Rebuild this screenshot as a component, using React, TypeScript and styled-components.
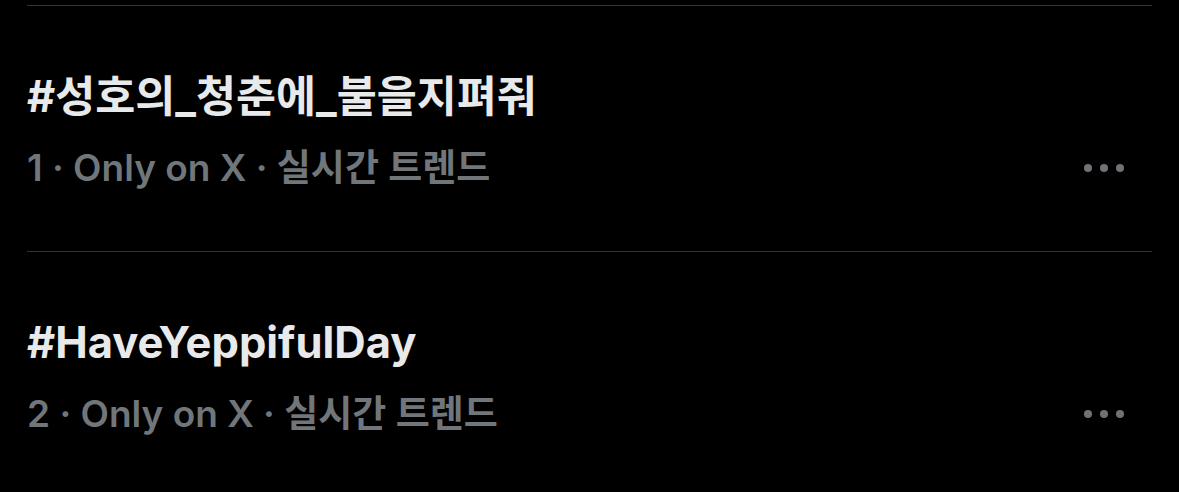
import React from "react";
import styled, { createGlobalStyle } from "styled-components";

const Global = createGlobalStyle`
  html, body { margin: 0; padding: 0; background: #000; }
  body { font-family: Inter, "Noto Sans CJK KR", "Noto Sans", sans-serif; -webkit-font-smoothing: antialiased; }
`;

const List = styled.div`
  padding: 5px 27px 0;
  background: #000;
  min-height: 492px;
  box-sizing: border-box;
`;

const Row = styled.div`
  border-top: 1px solid #2f3336;
  padding: 65px 0 61px;
  display: grid;
  grid-template-columns: 1fr auto;
  grid-template-rows: 50px 44px;
  row-gap: 25px;
  align-items: center;
`;

const Title = styled.div`
  grid-column: 1 / 2;
  font-size: 43.5px;
  line-height: 50px;
  font-weight: 700;
  color: #e7e9ea;
  white-space: nowrap;
`;

const Meta = styled.div`
  grid-column: 1 / 2;
  font-size: 37px;
  line-height: 44px;
  font-weight: 600;
  color: #71767b;
  white-space: nowrap;
`;

const More = styled.div`
  grid-column: 2 / 3;
  grid-row: 2 / 3;
  display: flex;
  gap: 8px;
  margin-right: 28px;
`;

const Dot = styled.span`
  width: 8px;
  height: 8px;
  border-radius: 50%;
  background: #6e7175;
`;

const trends = [
  { rank: 1, name: "#성호의_청춘에_불을지펴줘" },
  { rank: 2, name: "#HaveYeppifulDay" },
];

export default function App() {
  return (
    <>
      <Global />
      <List>
        {trends.map((t) => (
          <Row key={t.rank}>
            <Title>{t.name}</Title>
            <Meta>{t.rank} · Only on X · 실시간 트렌드</Meta>
            <More>
              <Dot />
              <Dot />
              <Dot />
            </More>
          </Row>
        ))}
      </List>
    </>
  );
}
